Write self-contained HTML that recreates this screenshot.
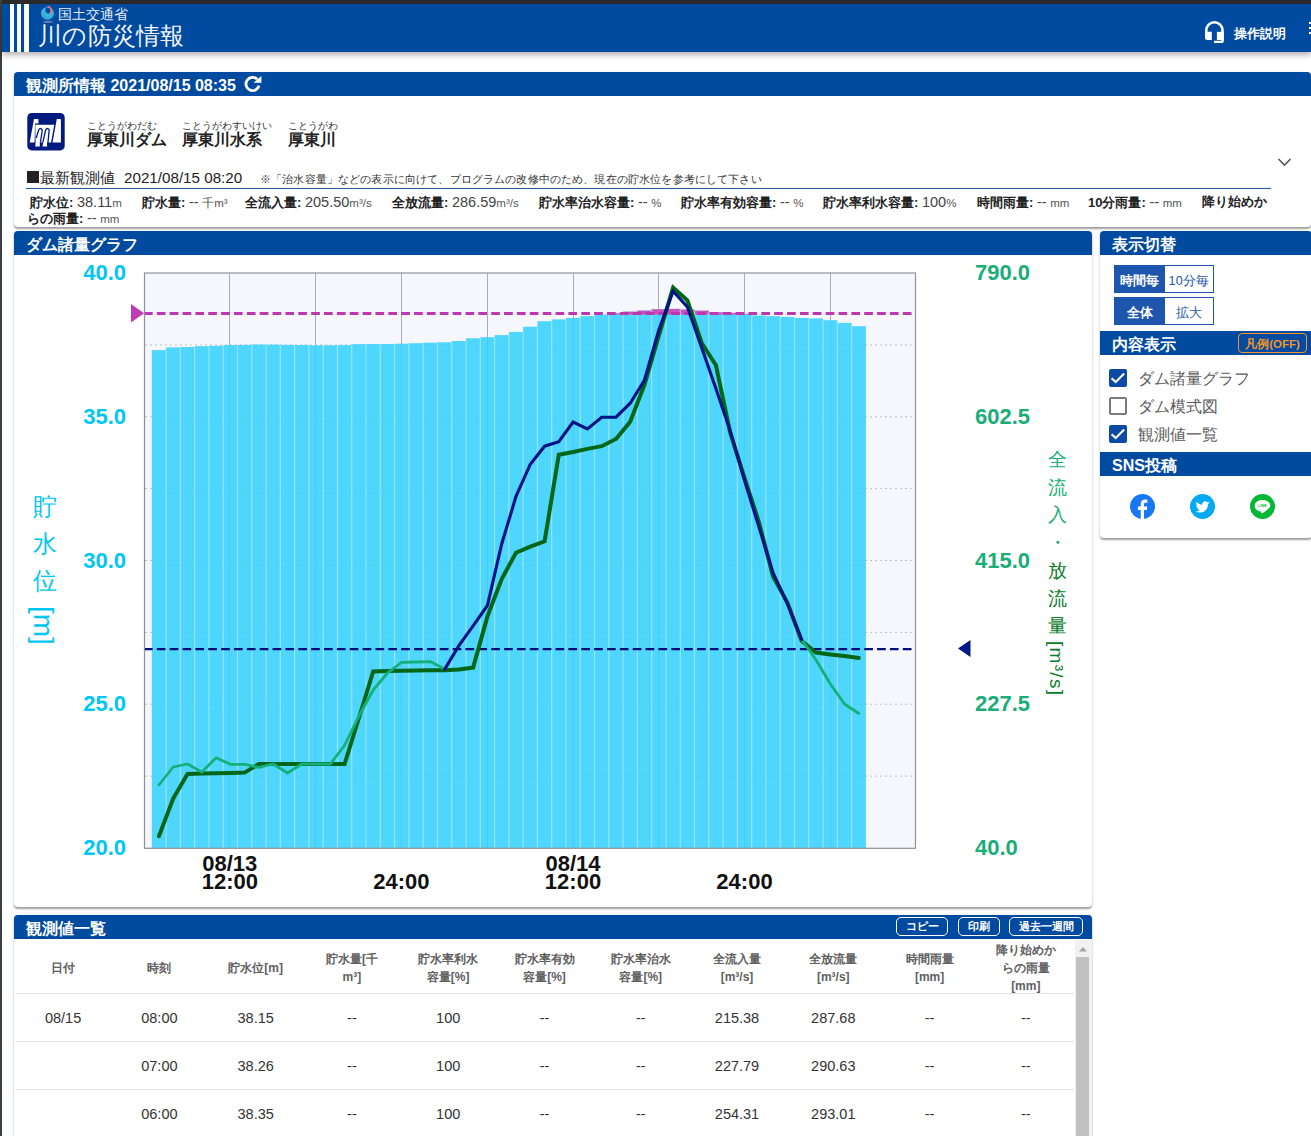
<!DOCTYPE html>
<html lang="ja">
<head>
<meta charset="utf-8">
<title>川の防災情報</title>
<style>
html,body{margin:0;padding:0;}
body{width:1311px;height:1136px;overflow:hidden;position:relative;background:#fff;font-family:"Liberation Sans",sans-serif;color:#333;}
.abs{position:absolute;}
.nowrap{white-space:nowrap;}
#topdark{left:0;top:0;width:1311px;height:4px;background:#2b2b2b;}
#leftdark{left:0;top:0;width:2px;height:1136px;background:#3a3f44;}
#header{left:2px;top:4px;width:1309px;height:48px;background:#004aa0;box-shadow:0 3px 6px rgba(0,0,0,0.3);z-index:2;}
.stripe{position:absolute;top:0;height:48px;background:#fff;}
.card{position:absolute;background:#fff;border-radius:4px;box-shadow:0 1.5px 2px rgba(0,0,0,0.38),0 0 1px rgba(0,0,0,0.07);}
.ttl{position:absolute;left:0;top:0;right:0;height:24px;background:#004aa0;border-radius:4px 4px 0 0;color:#fff;font-weight:bold;font-size:16px;line-height:24px;}
.ttl span{position:absolute;left:12px;top:2px;white-space:nowrap;}
.dl{font-size:13px;line-height:16px;color:#333;}
.dl b{font-weight:bold;color:#222;}
.dl i{font-style:normal;font-size:14.5px;color:#444;}
.dl u{text-decoration:none;font-size:11.5px;color:#555;}
.tg{position:absolute;width:100px;height:28px;}
.tg div{position:absolute;top:0;height:26px;line-height:26px;text-align:center;font-size:12px;white-space:nowrap;}
.tg .on{left:0;width:51px;height:28px;line-height:32px;font-size:12.5px;background:#1e56ad;color:#fff;font-weight:bold;}
.tg .off{left:51px;width:48px;line-height:31px;font-size:12.5px;letter-spacing:0.3px;border:1px solid #1e56ad;border-left:none;background:#fff;color:#2457a8;}
.cb{position:absolute;width:18px;height:18px;border-radius:2px;box-sizing:border-box;}
.cb.on{background:#0b4ba3;}
.cb.off{border:2px solid #7a7a7a;background:#fff;}
.cb svg{position:absolute;left:0;top:0;}
.cbl{position:absolute;font-size:16px;line-height:24px;color:#5a5a5a;white-space:nowrap;}
.tb{position:absolute;top:2px;height:17px;border:1.5px solid #fff;border-radius:5px;color:#fff;font-size:11px;line-height:17px;text-align:center;font-weight:bold;white-space:nowrap;}
.th{position:absolute;width:96px;text-align:center;font-size:12px;line-height:18px;font-weight:bold;color:#606060;white-space:nowrap;}
.td{position:absolute;width:96px;text-align:center;font-size:14.5px;line-height:22px;color:#333;white-space:nowrap;}
.yl{position:absolute;width:100px;text-align:right;font-size:22px;line-height:26px;font-weight:bold;color:#00c6f4;white-space:nowrap;}
.yr{position:absolute;width:100px;text-align:left;font-size:22px;line-height:26px;font-weight:bold;color:#19ad78;white-space:nowrap;}
.xl{position:absolute;width:80px;text-align:center;font-size:22px;line-height:22px;font-weight:bold;color:#111;white-space:nowrap;}
.lt{position:absolute;width:24px;text-align:center;font-size:24px;line-height:28px;color:#00c6f4;white-space:nowrap;}
.rt{position:absolute;width:20px;text-align:center;font-size:19px;line-height:22px;white-space:nowrap;}
</style>
</head>
<body>
<div id="topdark" class="abs"></div>
<div id="leftdark" class="abs"></div>

<!-- HEADER -->
<div id="header" class="abs">
  <div class="stripe" style="left:8px;width:4px"></div>
  <div class="stripe" style="left:15px;width:4px"></div>
  <div class="stripe" style="left:22px;width:5px"></div>
  <svg class="abs" style="left:38px;top:1px" width="16" height="20" viewBox="0 0 16 20">
    <circle cx="7.5" cy="8.3" r="6.4" fill="#3cb6e0"/>
    <path d="M2.2 9 Q3 13.8 8 14 Q12.5 13.5 13.2 9.5 Q11 12.3 7.8 12 Q4 11.5 2.2 9Z" fill="#2f9fd2" opacity="0.7"/>
    <circle cx="8.4" cy="5.3" r="3.1" fill="#004aa0"/>
    <path d="M7 0.9 A4.7 4.7 0 0 1 10.7 9.1 L9.2 7.9 A3.0 3.0 0 0 0 7.9 2.5 Z" fill="#f07070"/>
    <ellipse cx="7.9" cy="16.8" rx="4.8" ry="0.9" fill="#7f8aa8"/>
  </svg>
  <div class="abs nowrap" style="left:56px;top:1px;font-size:14px;line-height:18px;color:#e6e9f5;letter-spacing:0px">国土交通省</div>
  <div class="abs nowrap" style="left:36px;top:17px;font-size:24px;line-height:30px;color:#f4f5fb;letter-spacing:0.3px">川の防災情報</div>
  <svg class="abs" style="left:1202px;top:16px" width="22" height="25" viewBox="0 0 22 25">
    <path d="M2.3 19 V10.3 A8.1 8.1 0 0 1 18.5 10.3 V20.5" fill="none" stroke="#fff" stroke-width="2.6"/>
    <path d="M1 11.8 H7.8 V20 H3.5 Q1 20 1 17.5 Z" fill="#fff"/>
    <rect x="12.9" y="11.8" width="6.9" height="8.2" fill="#fff"/>
    <path d="M19.8 19 V21.3 Q19.8 23 18 23 H10 V20.8 H17.6 V19Z" fill="#fff"/>
  </svg>
  <div class="abs nowrap" style="left:1232px;top:22px;font-size:12.5px;line-height:16px;color:#fff;font-weight:bold">操作説明</div>
  <div class="abs" style="left:1307px;top:18px;width:4px;height:2px;background:#fff;box-shadow:0 5px 0 #fff,0 10px 0 #fff"></div>
</div>

<!-- STATION CARD -->
<div class="card" style="left:14px;top:72px;width:1297px;height:155px;">
  <div class="ttl"><span>観測所情報 2021/08/15 08:35</span>
    <svg class="abs" style="left:229px;top:3px" width="19" height="19" viewBox="0 0 19 19">
      <path d="M16 10.6 A6.6 6.6 0 1 1 14.2 4.3" fill="none" stroke="#fff" stroke-width="2.8"/>
      <path d="M10.6 7.7 L18.4 7.7 L18.4 1 Z" fill="#fff"/>
    </svg>
  </div>
</div>
<svg class="abs" style="left:27px;top:113px" width="38" height="38" viewBox="0 0 38 38">
  <rect x="0.3" y="0" width="37.4" height="37.4" rx="4.5" fill="#001a80"/>
  <path d="M7 6 H11.4 V10.4 H8 L7.6 29.6 H2.7 Z M29.8 6 H33.9 V29.6 H25.5 Z M8.3 11.8 H27.3 L24 29.6 H20.3 V33.5 H15.5 L16.2 29.6 H12.8 V33.5 H8.3 L8.6 29.6 Z" fill="#fff"/>
  <path d="M9.3 25 L11.6 17 Q13.5 14 15.3 17 L13.4 29.6 M15.8 29.6 L18.6 17 Q20.4 14 22.2 17 L20.6 33" fill="none" stroke="#001a80" stroke-width="1.3"/>
</svg>
<div class="abs nowrap" style="left:87px;top:119px;font-size:10px;line-height:14px;color:#333">ことうがわだむ</div>
<div class="abs nowrap" style="left:87px;top:130px;font-size:16px;line-height:20px;color:#222;font-weight:bold">厚東川ダム</div>
<div class="abs nowrap" style="left:182px;top:119px;font-size:10px;line-height:14px;color:#333">ことうがわすいけい</div>
<div class="abs nowrap" style="left:182px;top:130px;font-size:16px;line-height:20px;color:#222;font-weight:bold">厚東川水系</div>
<div class="abs nowrap" style="left:288px;top:119px;font-size:10px;line-height:14px;color:#333">ことうがわ</div>
<div class="abs nowrap" style="left:288px;top:130px;font-size:16px;line-height:20px;color:#222;font-weight:bold">厚東川</div>
<svg class="abs" style="left:1277px;top:157px" width="15" height="10" viewBox="0 0 15 10">
  <path d="M1.5 2 L7.5 8 L13.5 2" fill="none" stroke="#555" stroke-width="1.6"/>
</svg>
<div class="abs" style="left:27px;top:171px;width:12px;height:12px;background:#222"></div><div class="abs nowrap" style="left:40px;top:169px;font-size:14.5px;line-height:18px;color:#222">最新観測値</div>
<div class="abs nowrap" style="left:124px;top:169px;font-size:15.2px;line-height:18px;color:#222">2021/08/15 08:20</div>
<div class="abs nowrap" style="left:260px;top:172px;font-size:11px;line-height:14px;color:#333;letter-spacing:0.15px">※「治水容量」などの表示に向けて、プログラムの改修中のため、現在の貯水位を参考にして下さい</div>
<div class="abs" style="left:26px;top:188px;width:1245px;height:1px;background:#1f5aa8"></div>
<div class="abs nowrap dl" style="left:30px;top:194px"><b>貯水位:</b> <i>38.11</i><u>m</u></div>
<div class="abs nowrap dl" style="left:142px;top:194px"><b>貯水量:</b> <i>--</i> <u>千m³</u></div>
<div class="abs nowrap dl" style="left:245px;top:194px"><b>全流入量:</b> <i>205.50</i><u>m³/s</u></div>
<div class="abs nowrap dl" style="left:392px;top:194px"><b>全放流量:</b> <i>286.59</i><u>m³/s</u></div>
<div class="abs nowrap dl" style="left:539px;top:194px"><b>貯水率治水容量:</b> <i>--</i> <u>%</u></div>
<div class="abs nowrap dl" style="left:681px;top:194px"><b>貯水率有効容量:</b> <i>--</i> <u>%</u></div>
<div class="abs nowrap dl" style="left:823px;top:194px"><b>貯水率利水容量:</b> <i>100</i><u>%</u></div>
<div class="abs nowrap dl" style="left:977px;top:194px"><b>時間雨量:</b> <i>--</i> <u>mm</u></div>
<div class="abs nowrap dl" style="left:1088px;top:194px"><b>10分雨量:</b> <i>--</i> <u>mm</u></div>
<div class="abs nowrap dl" style="left:1202px;top:194px"><b>降り始めか</b></div>
<div class="abs nowrap dl" style="left:27px;top:210px"><b>らの雨量:</b> <i>--</i> <u>mm</u></div>

<!-- CHART CARD -->
<div class="card" style="left:14px;top:231px;width:1078px;height:676px;">
  <div class="ttl"><span>ダム諸量グラフ</span></div>
</div>

<!-- SIDEBAR -->
<div class="card" style="left:1100px;top:231px;width:212px;height:307px;">
  <div class="ttl"><span>表示切替</span></div>
  <div class="tg" style="left:14px;top:34px"><div class="on">時間毎</div><div class="off">10分毎</div></div>
  <div class="tg" style="left:14px;top:66px"><div class="on">全体</div><div class="off">拡大</div></div>
  <div class="ttl" style="top:100px;border-radius:0"><span>内容表示</span>
    <div class="abs nowrap" style="left:138px;top:2px;width:67px;height:18px;border:1.5px solid #f29428;border-radius:4px;color:#f29428;font-size:11.5px;line-height:20px;text-align:center;font-weight:bold">凡例(OFF)</div>
  </div>
  <div class="cb on" style="left:9px;top:138px"><svg width="18" height="18" viewBox="0 0 18 18"><path d="M2.6 9.2 L6.7 13 L15.2 4.4" fill="none" stroke="#fff" stroke-width="2.1"/></svg></div>
  <div class="cbl" style="left:38px;top:136px">ダム諸量グラフ</div>
  <div class="cb off" style="left:9px;top:166px"></div>
  <div class="cbl" style="left:38px;top:164px">ダム模式図</div>
  <div class="cb on" style="left:9px;top:194px"><svg width="18" height="18" viewBox="0 0 18 18"><path d="M2.6 9.2 L6.7 13 L15.2 4.4" fill="none" stroke="#fff" stroke-width="2.1"/></svg></div>
  <div class="cbl" style="left:38px;top:192px">観測値一覧</div>
  <div class="ttl" style="top:221px;border-radius:0"><span>SNS投稿</span></div>
  <svg class="abs" style="left:30px;top:263px" width="25" height="25" viewBox="0 0 24 24">
    <circle cx="12" cy="12" r="12" fill="#1877f2"/>
    <path d="M13.4 24 V15.3 H16.2 L16.6 12 H13.4 V10 C13.4 9 13.8 8.4 15.1 8.4 H16.7 V5.5 C16.3 5.4 15.3 5.3 14.3 5.3 C11.9 5.3 10.3 6.8 10.3 9.5 V12 H7.6 V15.3 H10.3 V24 Z" fill="#fff"/>
  </svg>
  <svg class="abs" style="left:90px;top:263px" width="25" height="25" viewBox="0 0 24 24">
    <circle cx="12" cy="12" r="12" fill="#03a9f4"/>
    <path d="M18.5 8.2c-.5.2-1 .4-1.5.4.6-.3 1-.9 1.2-1.5-.5.3-1.1.5-1.7.7-.5-.5-1.2-.9-2-.9-1.5 0-2.7 1.2-2.7 2.7 0 .2 0 .4.1.6-2.3-.1-4.3-1.2-5.6-2.8-.2.4-.4.9-.4 1.4 0 .9.5 1.8 1.2 2.3-.4 0-.9-.1-1.2-.3 0 1.3.9 2.4 2.2 2.7-.2.1-.5.1-.7.1-.2 0-.3 0-.5-.1.3 1.1 1.4 1.9 2.6 1.9-.9.7-2.1 1.2-3.4 1.2H5.5c1.2.8 2.6 1.2 4.1 1.2 5 0 7.7-4.1 7.7-7.7v-.4c.5-.4 1-.9 1.3-1.4z" fill="#fff"/>
  </svg>
  <svg class="abs" style="left:150px;top:263px" width="25" height="25" viewBox="0 0 24 24">
    <circle cx="12" cy="12" r="12" fill="#00b833"/>
    <path d="M12 5.8 C7.6 5.8 4.5 8.3 4.5 11.4 C4.5 14.2 7 16.4 10.4 16.9 C10.9 17 10.9 17.4 10.8 18.2 C10.8 18.6 11 18.8 11.6 18.5 C13.5 17.4 16 15.6 17.8 13.8 C19 12.8 19.5 12.1 19.5 11.4 C19.5 8.3 16.4 5.8 12 5.8Z" fill="#fff"/>
    <text x="12" y="12.9" font-size="3.6" font-weight="bold" fill="#00b833" text-anchor="middle" font-family="Liberation Sans">LINE</text>
  </svg>
</div>

<!-- TABLE CARD -->
<div class="card" style="left:14px;top:915px;width:1078px;height:240px;">
  <div class="ttl"><span>観測値一覧</span>
    <div class="tb" style="left:882px;width:50px">コピー</div>
    <div class="tb" style="left:944px;width:40px">印刷</div>
    <div class="tb" style="left:995px;width:72px">過去一週間</div>
  </div>
</div>
<div class="abs" style="left:15px;top:993px;width:1059px;height:1px;background:#e2e2e2"></div>
<div class="abs" style="left:15px;top:1041px;width:1059px;height:1px;background:#e2e2e2"></div>
<div class="abs" style="left:15px;top:1089px;width:1059px;height:1px;background:#e2e2e2"></div>
<div class="abs" style="left:1075px;top:940px;width:17px;height:196px;background:#f1f1f1"></div>
<div class="abs" style="left:1076px;top:957px;width:13px;height:179px;background:#c1c1c1"></div>
<svg class="abs" style="left:1077px;top:945px" width="12" height="8"><path d="M2 6.5 L6 2 L10 6.5Z" fill="#a3a3a3"/></svg>
<div class="th" style="left:15.1px;top:958.5px">日付</div>
<div class="th" style="left:111.4px;top:958.5px">時刻</div>
<div class="th" style="left:207.7px;top:958.5px">貯水位[m]</div>
<div class="th" style="left:303.9px;top:949.5px">貯水量[千<br>m³]</div>
<div class="th" style="left:400.2px;top:949.5px">貯水率利水<br>容量[%]</div>
<div class="th" style="left:496.5px;top:949.5px">貯水率有効<br>容量[%]</div>
<div class="th" style="left:592.8px;top:949.5px">貯水率治水<br>容量[%]</div>
<div class="th" style="left:689.0px;top:949.5px">全流入量<br>[m³/s]</div>
<div class="th" style="left:785.3px;top:949.5px">全放流量<br>[m³/s]</div>
<div class="th" style="left:881.6px;top:949.5px">時間雨量<br>[mm]</div>
<div class="th" style="left:977.8px;top:940.5px">降り始めか<br>らの雨量<br>[mm]</div>
<div class="td" style="left:15.1px;top:1007.0px">08/15</div>
<div class="td" style="left:111.4px;top:1007.0px">08:00</div>
<div class="td" style="left:207.7px;top:1007.0px">38.15</div>
<div class="td" style="left:303.9px;top:1007.0px">--</div>
<div class="td" style="left:400.2px;top:1007.0px">100</div>
<div class="td" style="left:496.5px;top:1007.0px">--</div>
<div class="td" style="left:592.8px;top:1007.0px">--</div>
<div class="td" style="left:689.0px;top:1007.0px">215.38</div>
<div class="td" style="left:785.3px;top:1007.0px">287.68</div>
<div class="td" style="left:881.6px;top:1007.0px">--</div>
<div class="td" style="left:977.8px;top:1007.0px">--</div>
<div class="td" style="left:111.4px;top:1055.0px">07:00</div>
<div class="td" style="left:207.7px;top:1055.0px">38.26</div>
<div class="td" style="left:303.9px;top:1055.0px">--</div>
<div class="td" style="left:400.2px;top:1055.0px">100</div>
<div class="td" style="left:496.5px;top:1055.0px">--</div>
<div class="td" style="left:592.8px;top:1055.0px">--</div>
<div class="td" style="left:689.0px;top:1055.0px">227.79</div>
<div class="td" style="left:785.3px;top:1055.0px">290.63</div>
<div class="td" style="left:881.6px;top:1055.0px">--</div>
<div class="td" style="left:977.8px;top:1055.0px">--</div>
<div class="td" style="left:111.4px;top:1103.0px">06:00</div>
<div class="td" style="left:207.7px;top:1103.0px">38.35</div>
<div class="td" style="left:303.9px;top:1103.0px">--</div>
<div class="td" style="left:400.2px;top:1103.0px">100</div>
<div class="td" style="left:496.5px;top:1103.0px">--</div>
<div class="td" style="left:592.8px;top:1103.0px">--</div>
<div class="td" style="left:689.0px;top:1103.0px">254.31</div>
<div class="td" style="left:785.3px;top:1103.0px">293.01</div>
<div class="td" style="left:881.6px;top:1103.0px">--</div>
<div class="td" style="left:977.8px;top:1103.0px">--</div>

<svg class="abs" style="left:0;top:0" width="1311" height="1136" viewBox="0 0 1311 1136">
<rect x="144.0" y="273.0" width="771.5" height="575.0" fill="#f6f6fd"/>
<path d="M145.0 344.9H914.5M145.0 416.8H914.5M145.0 488.6H914.5M145.0 560.5H914.5M145.0 632.4H914.5M145.0 704.2H914.5M145.0 776.1H914.5" stroke="#c0c0c6" stroke-width="1" stroke-dasharray="2 3" fill="none"/>
<path d="M229.5 273.0V848.0M315.5 273.0V848.0M401.5 273.0V848.0M487.5 273.0V848.0M573.5 273.0V848.0M658.5 273.0V848.0M744.5 273.0V848.0M830.5 273.0V848.0" stroke="#acacb4" stroke-width="1" fill="none"/>
<g fill="#35d1fc" fill-opacity="0.87"><rect x="151.80" y="350.1" width="14.28" height="497.9"/><rect x="166.08" y="347.4" width="14.28" height="500.6"/><rect x="180.37" y="347.0" width="14.28" height="501.0"/><rect x="194.65" y="346.2" width="14.28" height="501.8"/><rect x="208.93" y="345.8" width="14.28" height="502.2"/><rect x="223.21" y="345.1" width="14.28" height="502.9"/><rect x="237.49" y="344.9" width="14.28" height="503.1"/><rect x="251.78" y="344.5" width="14.28" height="503.5"/><rect x="266.06" y="344.6" width="14.28" height="503.4"/><rect x="280.34" y="344.9" width="14.28" height="503.1"/><rect x="294.62" y="345.0" width="14.28" height="503.0"/><rect x="308.90" y="345.3" width="14.28" height="502.7"/><rect x="323.19" y="345.3" width="14.28" height="502.7"/><rect x="337.47" y="345.1" width="14.28" height="502.9"/><rect x="351.75" y="344.2" width="14.28" height="503.8"/><rect x="366.03" y="344.1" width="14.28" height="503.9"/><rect x="380.31" y="344.1" width="14.28" height="503.9"/><rect x="394.59" y="343.7" width="14.28" height="504.3"/><rect x="408.88" y="343.2" width="14.28" height="504.8"/><rect x="423.16" y="342.7" width="14.28" height="505.3"/><rect x="437.44" y="342.3" width="14.28" height="505.7"/><rect x="451.72" y="341.0" width="14.28" height="507.0"/><rect x="466.00" y="338.3" width="14.28" height="509.7"/><rect x="480.29" y="337.2" width="14.28" height="510.8"/><rect x="494.57" y="335.1" width="14.28" height="512.9"/><rect x="508.85" y="331.9" width="14.28" height="516.1"/><rect x="523.13" y="326.7" width="14.28" height="521.3"/><rect x="537.42" y="321.2" width="14.28" height="526.8"/><rect x="551.70" y="319.4" width="14.28" height="528.6"/><rect x="565.98" y="317.9" width="14.28" height="530.1"/><rect x="580.26" y="316.1" width="14.28" height="531.9"/><rect x="594.54" y="314.6" width="14.28" height="533.4"/><rect x="608.83" y="313.4" width="14.28" height="534.6"/><rect x="623.11" y="311.7" width="14.28" height="536.3"/><rect x="637.39" y="310.6" width="14.28" height="537.4"/><rect x="651.67" y="309.3" width="14.28" height="538.7"/><rect x="665.95" y="308.9" width="14.28" height="539.1"/><rect x="680.24" y="309.6" width="14.28" height="538.4"/><rect x="694.52" y="310.7" width="14.28" height="537.3"/><rect x="708.80" y="312.4" width="14.28" height="535.6"/><rect x="723.08" y="312.9" width="14.28" height="535.1"/><rect x="737.36" y="313.9" width="14.28" height="534.1"/><rect x="751.64" y="315.5" width="14.28" height="532.5"/><rect x="765.93" y="316.1" width="14.28" height="531.9"/><rect x="780.21" y="317.0" width="14.28" height="531.0"/><rect x="794.49" y="317.9" width="14.28" height="530.1"/><rect x="808.77" y="318.4" width="14.28" height="529.6"/><rect x="823.06" y="320.2" width="14.28" height="527.8"/><rect x="837.34" y="322.9" width="14.28" height="525.1"/><rect x="851.62" y="326.2" width="14.28" height="521.8"/></g>
<g fill="#ca50bc"><rect x="608.83" y="313.4" width="14.28" height="1.1"/><rect x="623.11" y="311.7" width="14.28" height="2.8"/><rect x="637.39" y="310.6" width="14.28" height="3.9"/><rect x="651.67" y="309.3" width="14.28" height="5.2"/><rect x="665.95" y="308.9" width="14.28" height="5.6"/><rect x="680.24" y="309.6" width="14.28" height="4.9"/><rect x="694.52" y="310.7" width="14.28" height="3.8"/><rect x="708.80" y="312.4" width="14.28" height="2.1"/><rect x="723.08" y="312.9" width="14.28" height="1.6"/><rect x="737.36" y="313.9" width="14.28" height="0.6"/></g>
<path d="M166.08 350.1V848.0M180.36 347.4V848.0M194.65 347.0V848.0M208.93 346.2V848.0M223.21 345.8V848.0M237.49 345.1V848.0M251.78 344.9V848.0M266.06 344.6V848.0M280.34 344.9V848.0M294.62 345.0V848.0M308.90 345.3V848.0M323.19 345.3V848.0M337.47 345.3V848.0M351.75 345.1V848.0M366.03 344.2V848.0M380.31 344.1V848.0M394.60 344.1V848.0M408.88 343.7V848.0M423.16 343.2V848.0M437.44 342.7V848.0M451.72 342.3V848.0M466.01 341.0V848.0M480.29 338.3V848.0M494.57 337.2V848.0M508.85 335.1V848.0M523.13 331.9V848.0M537.41 326.7V848.0M551.70 321.2V848.0M565.98 319.4V848.0M580.26 317.9V848.0M594.54 316.1V848.0M608.82 314.6V848.0M623.11 313.4V848.0M637.39 311.7V848.0M651.67 310.6V848.0M665.95 309.3V848.0M680.23 309.6V848.0M694.52 310.7V848.0M708.80 312.4V848.0M723.08 312.9V848.0M737.36 313.9V848.0M751.64 315.5V848.0M765.93 316.1V848.0M780.21 317.0V848.0M794.49 317.9V848.0M808.77 318.4V848.0M823.05 320.2V848.0M837.34 322.9V848.0M851.62 326.2V848.0" stroke="#9ae6fe" stroke-width="1.4" stroke-opacity="0.75" fill="none"/>
<line x1="143.94" y1="313.4" x2="912" y2="313.4" stroke="#bd38ae" stroke-width="3" stroke-dasharray="8.7 4.162"/>
<line x1="143.94" y1="649.1" x2="912" y2="649.1" stroke="#000d7a" stroke-width="2.2" stroke-dasharray="8.7 4.162"/>
<polyline points="158.9,836.2 173.2,798.6 187.5,774.0 201.8,773.5 216.1,773.2 230.4,773.0 244.6,772.6 258.9,764.0 273.2,764.0 287.5,764.0 301.8,764.0 316.0,764.0 330.3,764.0 344.6,764.0 358.9,718.0 373.2,671.5 387.5,671.0 401.7,670.8 416.0,670.5 430.3,670.3 444.6,670.2 458.9,669.5 473.1,667.6 487.4,616.6 501.7,579.0 516.0,552.7 530.3,546.6 544.6,541.3 558.8,454.7 573.1,452.0 587.4,448.9 601.7,446.2 616.0,439.0 630.2,421.7 644.5,384.7 658.8,335.7 673.1,287.6 687.4,300.5 701.7,343.0 715.9,365.2 730.2,432.7 744.5,477.8 758.8,521.8 773.1,576.5 787.4,602.6 801.6,640.7 815.9,652.5 830.2,654.4 844.5,656.1 858.8,658.0" fill="none" stroke="#026617" stroke-width="4" stroke-linejoin="miter" stroke-miterlimit="3" stroke-linecap="round"/>
<polyline points="158.9,785.0 173.2,767.0 187.5,764.0 201.8,772.0 216.1,757.8 230.4,764.3 244.6,764.3 258.9,767.4 273.2,764.0 287.5,773.0 301.8,764.0 316.0,764.0 330.3,764.0 344.6,745.4 358.9,716.0 373.2,690.0 387.5,673.0 401.7,662.4 416.0,662.0 430.3,661.6 444.6,669.0" fill="none" stroke="#14b07a" stroke-width="2.8" stroke-linejoin="round" stroke-linecap="round"/>
<polyline points="801.6,639.5 815.9,659.7 830.2,683.7 844.5,704.0 858.8,713.5" fill="none" stroke="#14b07a" stroke-width="2.8" stroke-linejoin="round" stroke-linecap="round"/>
<polyline points="444.6,669.4 458.9,645.6 473.1,625.8 487.4,605.5 501.7,544.0 516.0,496.4 530.3,464.2 544.6,446.2 558.8,441.7 573.1,422.0 587.4,429.0 601.7,417.2 616.0,417.2 630.2,403.2 644.5,380.0 658.8,330.1 673.1,291.3 687.4,307.0 701.7,347.7 715.9,388.4 730.2,430.9 744.5,480.2 758.8,526.6 773.1,572.9 787.4,603.8 801.6,639.5" fill="none" stroke="#001385" stroke-width="3.1" stroke-linejoin="miter" stroke-miterlimit="3" stroke-linecap="round"/>
<rect x="144.5" y="273" width="771" height="575.3" fill="none" stroke="#909098" stroke-width="1.2"/>
<path d="M131 304L144 313.3L131 322.6Z" fill="#c23ab4"/>
<path d="M958 648.5L970.5 640V657Z" fill="#001a86"/>
</svg>
<div class="yl" style="left:26px;top:260.0px">40.0</div>
<div class="yl" style="left:26px;top:403.8px">35.0</div>
<div class="yl" style="left:26px;top:547.5px">30.0</div>
<div class="yl" style="left:26px;top:691.2px">25.0</div>
<div class="yl" style="left:26px;top:835.0px">20.0</div>
<div class="yr" style="left:975px;top:260.0px">790.0</div>
<div class="yr" style="left:975px;top:403.8px">602.5</div>
<div class="yr" style="left:975px;top:547.5px">415.0</div>
<div class="yr" style="left:975px;top:691.2px">227.5</div>
<div class="yr" style="left:975px;top:835.0px">40.0</div>
<div class="xl" style="left:189.8px;top:853px">08/13</div>
<div class="xl" style="left:189.8px;top:871px">12:00</div>
<div class="xl" style="left:361.3px;top:871px">24:00</div>
<div class="xl" style="left:533.0px;top:853px">08/14</div>
<div class="xl" style="left:533.0px;top:871px">12:00</div>
<div class="xl" style="left:704.5px;top:871px">24:00</div>
<div class="lt" style="left:33px;top:493.0px">貯</div>
<div class="lt" style="left:33px;top:530.0px">水</div>
<div class="lt" style="left:33px;top:567.0px">位</div>
<div class="lt" style="left:33px;top:606px;writing-mode:vertical-rl;font-size:28px;line-height:28px">[m]</div>
<div class="rt" style="left:1047px;top:449.0px;color:#19ad78">全</div>
<div class="rt" style="left:1047px;top:476.7px;color:#19ad78">流</div>
<div class="rt" style="left:1047px;top:504.4px;color:#19ad78">入</div>
<div class="rt" style="left:1047px;top:532.1px;color:#19ad78">・</div>
<div class="rt" style="left:1047px;top:559.8px;color:#0b7a2a">放</div>
<div class="rt" style="left:1047px;top:587.5px;color:#0b7a2a">流</div>
<div class="rt" style="left:1047px;top:615.2px;color:#0b7a2a">量</div>
<div class="rt" style="left:1046px;top:641px;writing-mode:vertical-rl;color:#0b7a2a;font-size:19px;line-height:20px;letter-spacing:1.3px">[m³/s]</div>
</body>
</html>
